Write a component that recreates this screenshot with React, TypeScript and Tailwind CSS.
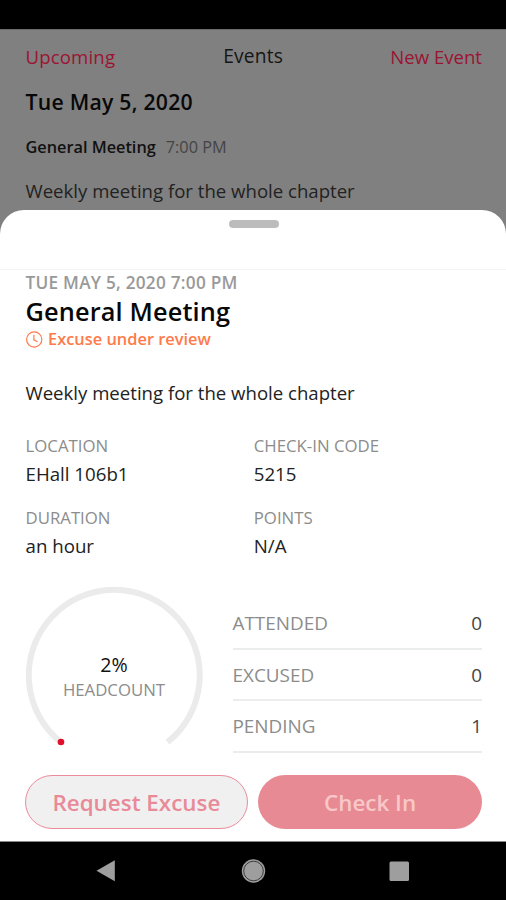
import type { ReactNode } from 'react';

const details = [
  { label: 'LOCATION', value: 'EHall 106b1' },
  { label: 'CHECK-IN CODE', value: '5215' },
  { label: 'DURATION', value: 'an hour' },
  { label: 'POINTS', value: 'N/A' },
];

const counts = [
  { label: 'ATTENDED', value: 0 },
  { label: 'EXCUSED', value: 0 },
  { label: 'PENDING', value: 1 },
];

function EventsPage() {
  return (
    <div className="h-[181px] bg-[#808080] border-t border-[#6a6a6a] pr-6 pl-[25.5px]">
      <header className="flex h-[53px] items-center justify-between text-[18.6px]">
        <span className="tracking-[0.15px] text-[#9c1432]">Upcoming</span>
        <span className="pl-px text-[19.2px] tracking-[0.2px] text-[#151515]">Events</span>
        <span className="text-[#9c1432]">New Event</span>
      </header>
      <h2 className="mt-[3px] text-[21.2px] leading-8 font-semibold tracking-[0.25px] text-[#080808]">
        Tue May 5, 2020
      </h2>
      <div className="mt-[17px] flex gap-[10px] text-[16.3px] leading-6">
        <span className="font-semibold text-[#111]">General Meeting</span>
        <span className="text-[#444]">7:00 PM</span>
      </div>
      <p className="mt-5 text-[18.6px] leading-6 text-[#222]">Weekly meeting for the whole chapter</p>
    </div>
  );
}

function Gauge() {
  return (
    <div className="relative h-[163px] w-[178px]">
      <svg width="178" height="163" viewBox="0 0 178 163" fill="none">
        <path d="M35 157.2 A85.5 85.5 0 1 1 141.5 157.2" stroke="#ebebeb" strokeWidth="6" />
        <circle cx="35" cy="157" r="3.3" fill="#e0102c" />
      </svg>
      <div className="absolute top-[67px] right-[1px] left-0 flex flex-col items-center">
        <span className="text-[19.6px] leading-[25px] text-[#111]">2%</span>
        <span className="text-[16.8px] leading-[25px] text-[#8c8c8c]">HEADCOUNT</span>
      </div>
    </div>
  );
}

function NavBar() {
  return (
    <nav className="h-[58px] bg-black">
      <svg width="506" height="58" viewBox="0 0 506 58" fill="#9e9e9e">
        <path d="M96.5 28.8 L114.8 18.3 V39.3 Z" />
        <circle cx="253.5" cy="29" r="11.7" />
        <circle cx="253.5" cy="29" r="9.8" fill="none" stroke="#3c3c3c" strokeWidth="1" />
        <rect x="389.5" y="19.5" width="19.5" height="19.5" rx="1.5" />
      </svg>
    </nav>
  );
}

function Button({ className, children }: { className: string; children: ReactNode }) {
  return (
    <button className={`h-[54px] rounded-full pt-[2px] text-[22.4px] font-semibold ${className}`}>{children}</button>
  );
}

export default function App() {
  return (
    <div
      className="flex h-[900px] w-[506px] flex-col overflow-hidden bg-[#808080]"
      style={{ fontFamily: '"Open Sans", sans-serif' }}
    >
      <div className="h-[29px] bg-black" />
      <EventsPage />
      <main className="h-[632px] rounded-t-[24px] border-b border-[#888] bg-white">
        <div className="flex h-[60px] justify-center border-b border-[#f4f4f4] pt-[10px] pl-px">
          <div className="h-[8px] w-[50px] rounded-full bg-[#bcbcbc]" />
        </div>
        <div className="pr-6 pl-[25.5px]">
          <p className="text-[17.2px] leading-[25px] font-semibold tracking-[0.26px] text-[#999]">
            TUE MAY 5, 2020 7:00 PM
          </p>
          <h1 className="text-[25.3px] leading-[33px] font-semibold tracking-[0.15px] text-[#080808]">
            General Meeting
          </h1>
          <div className="flex items-center gap-[5.5px] text-[16.4px] leading-[22px] font-semibold text-[#ff7a4a]">
            <svg width="17" height="17" viewBox="0 0 17 17" fill="none" stroke="currentColor" strokeWidth="1.2">
              <circle cx="8.2" cy="8.5" r="7.6" />
              <path d="M7.9 3.8 V8.8 L11.5 10.8" />
            </svg>
            Excuse under review
          </div>
          <p className="mt-[31px] text-[18.6px] leading-6 text-[#222]">Weekly meeting for the whole chapter</p>
          <div className="mt-[27px] grid grid-cols-2 gap-y-[17px]">
            {details.map((d) => (
              <div key={d.label}>
                <p className="text-[16.8px] leading-7 text-[#8c8c8c]">{d.label}</p>
                <p className="text-[18.7px] leading-[27px] text-[#222]">{d.value}</p>
              </div>
            ))}
          </div>
          <div className="mt-[26px] flex gap-[29px]">
            <Gauge />
            <div className="flex-1 pt-[13px]">
              {counts.map((c) => (
                <div
                  key={c.label}
                  className="flex h-[51.5px] items-center justify-between border-b-2 border-[#ebeded] pt-px text-[18.9px]"
                >
                  <span className="text-[#8c8c8c]">{c.label}</span>
                  <span className="text-[#444]">{c.value}</span>
                </div>
              ))}
            </div>
          </div>
          <div className="mt-[22px] -ml-px grid grid-cols-2 gap-[10px]">
            <Button className="border border-[#ea8c9b] bg-[#f0f0f0] text-[#e88a98]">Request Excuse</Button>
            <Button className="bg-[#e88a94] text-[#f8c8c8]">Check In</Button>
          </div>
        </div>
      </main>
      <NavBar />
    </div>
  );
}
